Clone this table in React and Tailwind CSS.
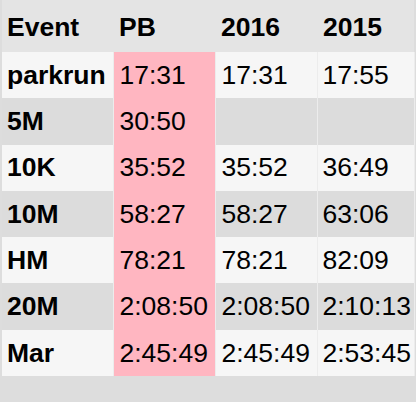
const rows = [
  ["parkrun", "17:31", "17:31", "17:55"],
  ["5M", "30:50", "", ""],
  ["10K", "35:52", "35:52", "36:49"],
  ["10M", "58:27", "58:27", "63:06"],
  ["HM", "78:21", "78:21", "82:09"],
  ["20M", "2:08:50", "2:08:50", "2:10:13"],
  ["Mar", "2:45:49", "2:45:49", "2:53:45"],
];

export default function App() {
  return (
    <div
      className="w-[416px] h-[402px] overflow-hidden bg-[#dddddd] text-black text-[26.5px] leading-none"
      style={{ fontFamily: '"Liberation Sans", Arial, sans-serif' }}
    >
      <table className="ml-[2px] table-fixed border-collapse w-[412px]">
        <colgroup>
          <col className="w-[111px]" />
          <col className="w-[102px]" />
          <col className="w-[102px]" />
          <col className="w-[97px]" />
        </colgroup>
        <thead>
          <tr className="h-[52px] bg-[#e4e4e4]">
            <th className="text-left font-bold pl-[5px] pt-[2px]">Event</th>
            <th className="text-left font-bold pl-[6px] pt-[2px]">PB</th>
            <th className="text-left font-bold pl-[6px] pt-[2px]">2016</th>
            <th className="text-left font-bold pl-[6px] pt-[2px]">2015</th>
          </tr>
        </thead>
        <tbody>
          {rows.map((r, i) => (
            <tr
              key={r[0]}
              className={`h-[46.3px] ${i % 2 === 0 ? "bg-[#f6f6f6]" : "bg-[#dcdcdc]"}`}
            >
              <td className="font-bold pl-[5px] border-r border-[#ececec] whitespace-nowrap">{r[0]}</td>
              <td className="pl-[6px] bg-[#ffb6c1] whitespace-nowrap">{r[1]}</td>
              <td className="pl-[6px] border-x border-[#ececec] whitespace-nowrap">{r[2]}</td>
              <td className="pl-[5px] border-r border-[#ececec] whitespace-nowrap">{r[3]}</td>
            </tr>
          ))}
        </tbody>
      </table>
    </div>
  );
}
